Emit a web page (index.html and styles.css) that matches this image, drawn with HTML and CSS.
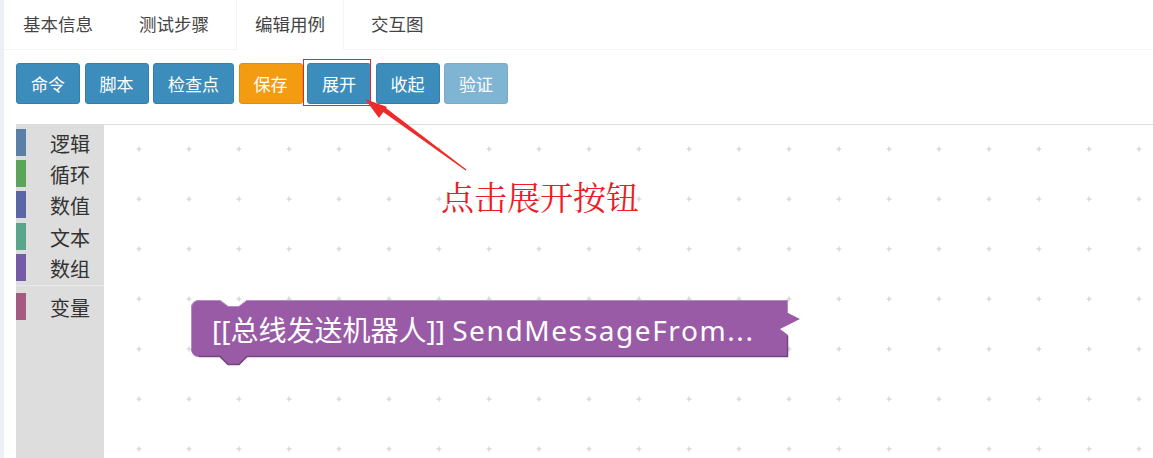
FILE: index.html
```html
<!DOCTYPE html>
<html lang="zh-CN">
  <head>
    <meta charset="UTF-8" />
    <meta name="viewport" content="width=device-width, initial-scale=1.0" />
    <title>编辑用例</title>
    <link rel="stylesheet" href="styles.css">
  </head>
  <body>
    <div class="page">
      <div class="box">
        <ul class="tabs">
          <li class="tab">基本信息</li>
          <li class="tab">测试步骤</li>
          <li class="tab active">编辑用例</li>
          <li class="tab">交互图</li>
        </ul>
        <div class="pane">
          <div class="toolbar">
            <button class="btn">命令</button>
            <button class="btn">脚本</button>
            <button class="btn">检查点</button>
            <button class="btn warning">保存</button>
            <button class="btn">展开</button>
            <button class="btn">收起</button>
            <button class="btn disabled">验证</button>
          </div>
          <div class="editor">
            <div class="toolbox">
              <div class="cat"><span class="swatch logic"></span><span class="label">逻辑</span></div>
              <div class="cat"><span class="swatch loop"></span><span class="label">循环</span></div>
              <div class="cat"><span class="swatch math"></span><span class="label">数值</span></div>
              <div class="cat"><span class="swatch text"></span><span class="label">文本</span></div>
              <div class="cat"><span class="swatch list"></span><span class="label">数组</span></div>
              <div class="sep"></div>
              <div class="cat"><span class="swatch vars"></span><span class="label">变量</span></div>
            </div>
            <svg class="workspace" xmlns="http://www.w3.org/2000/svg">
              <defs>
                <pattern id="grid" patternUnits="userSpaceOnUse" x="10" y="-1" width="50" height="50">
                  <path d="M22.5 25 H27.5 M25 22.5 V27.5" stroke="#cfcfcf" stroke-width="1.2" />
                </pattern>
              </defs>
              <rect width="100%" height="100%" fill="url(#grid)" />
              <g class="block" transform="translate(87,175)">
                <path fill="#995ba5" d="M0,8 A8,8 0 0 1 8,0 H29 l8,6 h11 l8,-6 H597 V13 l12,6 l-20,10 l8,6 V57 H56 l-8,8 h-11 l-8,-8 H8 A8,8 0 0 1 0,49 Z" />
                <path fill="none" stroke="#b48bbd" stroke-width="1" d="M0.5,49 V8 A7.5,7.5 0 0 1 8,0.5 H29 l8,6 h11 l8,-6 H596.5 V13" />
                <path fill="none" stroke="#74457e" stroke-width="1.5" d="M8,56.5 H29 l8,8 h11 l8,-8 H596.5 V36" />
                <text class="block-text" x="21" y="41">[[总线发送机器人]] <tspan class="latin">SendMessageFrom...</tspan></text>
              </g>
            </svg>
          </div>
        </div>
      </div>

      <div class="mark"></div>
      <svg class="arrow" xmlns="http://www.w3.org/2000/svg" width="1153" height="458">
        <polygon fill="#ee2a2a" points="465.6,170.6 379,109 382,105 466.4,169.4" />
        <polygon fill="#ee2a2a" points="365,99 387,107 379,118" />
      </svg>
      <div class="note">点击展开按钮</div>
    </div>
  </body>
</html>
```

FILE: styles.css
```css
body {
  margin: 0;
  font-family: "Noto Sans CJK SC", "Noto Sans", sans-serif;
  background-color: #fff;
}
ul {
  margin: 0;
  padding: 0;
  list-style: none;
}
.page {
  position: relative;
  height: 458px;
  padding-left: 4px;
  overflow: hidden;
  background-color: #ecf0f5;
}
.box {
  height: 100%;
  background-color: #fff;
}

/* tabs */
.tabs {
  display: flex;
  height: 49px;
  border-bottom: 1px solid #f4f4f4;
}
.tab {
  height: 49px;
  padding: 0 18px;
  margin-right: 8px;
  line-height: 48px;
  font-size: 17.5px;
  color: #444;
  border-left: 1px solid transparent;
  border-right: 1px solid transparent;
}
.tab.active {
  height: 50px;
  background-color: #fff;
  border-color: #f4f4f4;
}

/* buttons */
.pane {
  padding: 13px 0 0 12px;
}
.toolbar {
  display: flex;
  gap: 4.5px;
  margin-bottom: 20px;
}
.btn {
  height: 41px;
  padding: 0 14px;
  font-family: inherit;
  font-size: 17px;
  color: #fff;
  background-color: #3c8dbc;
  border: 1px solid #367fa9;
  border-radius: 3px;
}
.btn.warning {
  background-color: #f39c12;
  border-color: #e08e0b;
}
.btn.disabled {
  opacity: 0.65;
}

/* blockly editor */
.editor {
  display: flex;
  height: 333px;
  border-top: 1px solid #ddd;
}
.toolbox {
  width: 88px;
  padding-top: 4px;
  background-color: #ddd;
}
.cat {
  display: flex;
  height: 27px;
  margin-bottom: 4.2px;
}
.swatch {
  width: 10px;
}
.swatch.logic { background-color: #5b80a5; }
.swatch.loop { background-color: #5ba55b; }
.swatch.math { background-color: #5b67a5; }
.swatch.text { background-color: #5ba58c; }
.swatch.list { background-color: #745ba5; }
.swatch.vars { background-color: #a55b80; }
.label {
  margin-left: 24px;
  line-height: 29px;
  font-size: 20px;
  color: #333;
}
.sep {
  height: 1px;
  margin: 2px 0 7px 0;
  background-color: #e9e9e9;
}
.workspace {
  flex: 1;
  height: 333px;
  background-color: #fff;
}
.block-text {
  font-family: "Noto Sans", "Noto Sans CJK SC", sans-serif;
  font-size: 28px;
  fill: #fff;
}
.block-text .latin {
  letter-spacing: 1.6px;
}

/* annotation */
.mark {
  position: absolute;
  left: 303px;
  top: 59px;
  width: 68px;
  height: 47px;
  box-sizing: border-box;
  border: 1px solid #e5262d;
}
.arrow {
  position: absolute;
  left: 0;
  top: 0;
  pointer-events: none;
}
.note {
  position: absolute;
  left: 441px;
  top: 176px;
  line-height: 40px;
  font-family: "Noto Serif CJK SC", "Noto Sans CJK SC", serif;
  font-size: 33px;
  color: #ee1c25;
}
```
